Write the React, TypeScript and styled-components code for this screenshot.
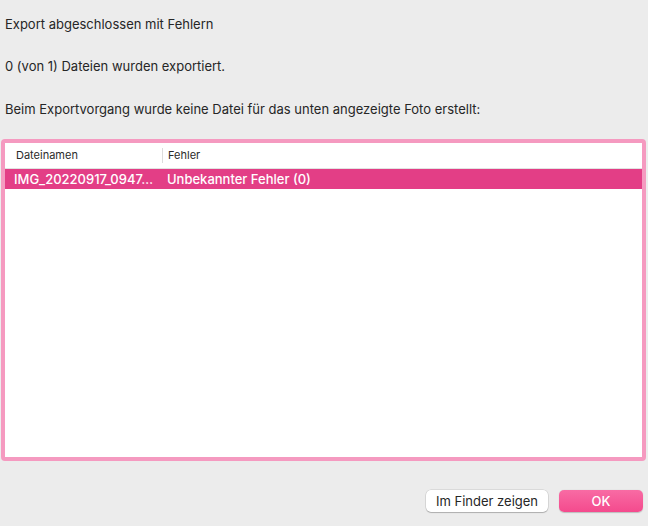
import React from "react";
import styled, { createGlobalStyle } from "styled-components";

const Global = createGlobalStyle`
  html, body { margin: 0; padding: 0; background: #ececec; }
  body { font-family: Inter, "Liberation Sans", sans-serif; -webkit-font-smoothing: antialiased; }
`;

const Window = styled.div`
  width: 648px;
  height: 526px;
  box-sizing: border-box;
  background: #ececec;
  display: flex;
  flex-direction: column;
  padding: 16px 2px 0 1px;
`;

const Message = styled.div<{ $gap: number }>`
  font-size: 13px;
  line-height: 16px;
  color: #262626;
  padding-left: 4px;
  margin-bottom: ${(p) => p.$gap}px;
`;

const Frame = styled.div`
  height: 322px;
  box-sizing: border-box;
  border: 4px solid #f59ac0;
  border-radius: 4px;
  background: #fff;
  display: flex;
  flex-direction: column;
`;

const Columns = "157px 1fr";

const HeaderRow = styled.div`
  display: grid;
  grid-template-columns: ${Columns};
  height: 25px;
  border-bottom: 1px solid #e2e2e2;
  align-items: center;
  font-size: 11px;
  color: #2b2b2b;
`;

const HeaderCell = styled.div<{ $sep?: boolean }>`
  padding-left: ${(p) => (p.$sep ? "5px" : "11px")};
  height: 15px;
  line-height: 15px;
  border-left: ${(p) => (p.$sep ? "1px solid #dcdcdc" : "none")};
`;

const DataRow = styled.div<{ $selected?: boolean }>`
  display: grid;
  grid-template-columns: ${Columns};
  height: 20px;
  align-items: center;
  background: ${(p) => (p.$selected ? "#e33e86" : "transparent")};
  color: ${(p) => (p.$selected ? "#fff" : "#222")};
  font-size: 13px;
  font-weight: 500;
`;

const Cell = styled.div<{ $first?: boolean }>`
  padding-left: ${(p) => (p.$first ? "9px" : "5px")};
  white-space: nowrap;
`;

const Footer = styled.div`
  display: flex;
  justify-content: flex-end;
  gap: 11px;
  margin-top: 29px;
  padding-right: 3px;
`;

const Button = styled.button<{ $primary?: boolean }>`
  height: 22px;
  width: ${(p) => (p.$primary ? "84px" : "122px")};
  border-radius: 5px;
  font-family: Inter, "Liberation Sans", sans-serif;
  font-size: 13px;
  padding: 0;
  border: none;
  color: ${(p) => (p.$primary ? "#fff" : "#262626")};
  background: ${(p) =>
    p.$primary ? "linear-gradient(#f86ba4, #f44a8d)" : "#ffffff"};
  box-shadow: ${(p) =>
    p.$primary
      ? "0 0.5px 1px rgba(0,0,0,0.2)"
      : "0 0 0 0.5px rgba(0,0,0,0.15), 0 1px 1px rgba(0,0,0,0.2)"};
  font-weight: ${(p) => (p.$primary ? 500 : 400)};
`;

export default function App() {
  return (
    <>
      <Global />
      <Window>
        <Message $gap={26}>Export abgeschlossen mit Fehlern</Message>
        <Message $gap={27}>0 (von 1) Dateien wurden exportiert.</Message>
        <Message $gap={22}>
          Beim Exportvorgang wurde keine Datei für das unten angezeigte Foto erstellt:
        </Message>
        <Frame>
          <HeaderRow>
            <HeaderCell>Dateinamen</HeaderCell>
            <HeaderCell $sep>Fehler</HeaderCell>
          </HeaderRow>
          <DataRow $selected>
            <Cell $first>IMG_20220917_0947…</Cell>
            <Cell>Unbekannter Fehler (0)</Cell>
          </DataRow>
        </Frame>
        <Footer>
          <Button>Im Finder zeigen</Button>
          <Button $primary>OK</Button>
        </Footer>
      </Window>
    </>
  );
}
